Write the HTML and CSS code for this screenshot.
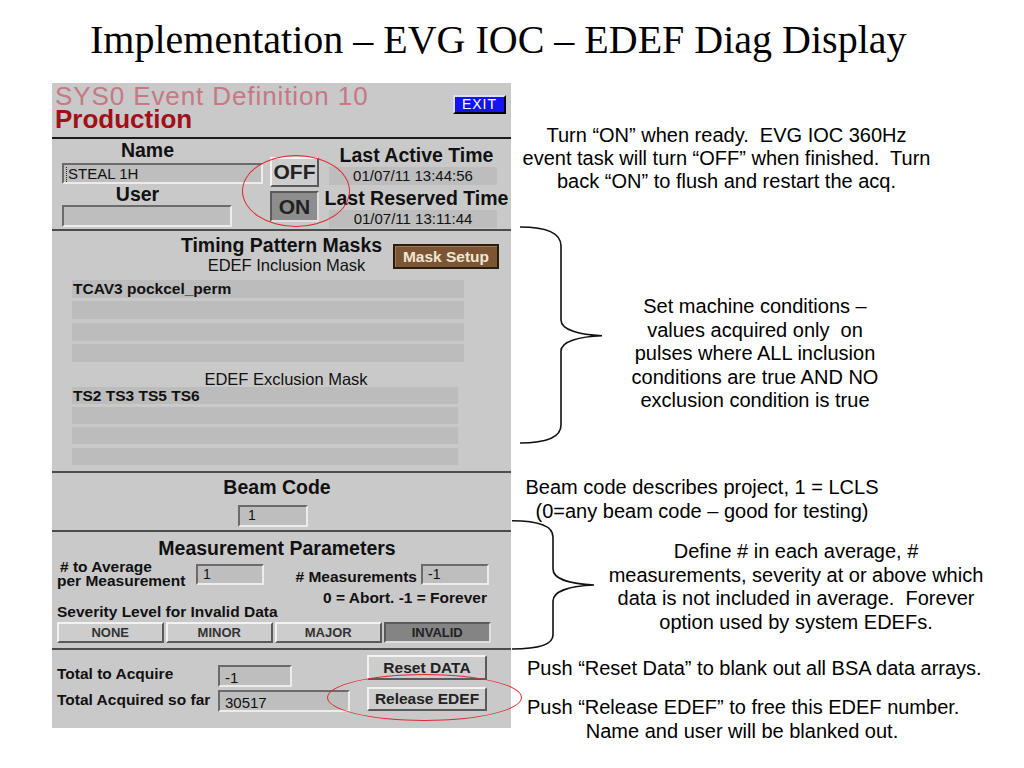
FILE: index.html
```html
<!DOCTYPE html>
<html lang="en">
<head>
    <meta charset="UTF-8">
    <title>Implementation – EVG IOC – EDEF Diag Display</title>
    <link rel="stylesheet" href="styles.css">
</head>
<body>
    <h1 class="slide-title">Implementation – EVG IOC – EDEF Diag Display</h1>
    <div class="slide">
        <div class="panel">
            <div class="sec head">
                <div class="head-title">
                    <div class="sys">SYS0 Event Definition 10</div>
                    <div class="prod">Production</div>
                </div>
                <div class="exit">EXIT</div>
            </div>

            <div class="sec ident">
                <div class="ident-left">
                    <div class="lbl lbl-name">Name</div>
                    <div class="field field-name"><span class="caret"></span>STEAL 1H</div>
                    <div class="lbl lbl-user">User</div>
                    <div class="field field-user"></div>
                </div>
                <div class="ident-mid">
                    <div class="btn btn-off">OFF</div>
                    <div class="btn btn-on">ON</div>
                </div>
                <div class="ident-right">
                    <div class="lbl">Last Active Time</div>
                    <div class="time">01/07/11 13:44:56</div>
                    <div class="lbl">Last Reserved Time</div>
                    <div class="time">01/07/11 13:11:44</div>
                </div>
                <div class="ring ring-onoff"></div>
            </div>

            <div class="sec masks">
                <div class="mask-head">
                    <div class="lbl mask-title">Timing Pattern Masks</div>
                    <div class="mask-sub">EDEF Inclusion Mask</div>
                    <div class="btn-setup">Mask Setup</div>
                </div>
                <div class="mask-rows incl">
                    <div class="mask-row">TCAV3 pockcel_perm</div>
                    <div class="mask-row"></div>
                    <div class="mask-row"></div>
                    <div class="mask-row"></div>
                </div>
                <div class="mask-sub excl-title">EDEF Exclusion Mask</div>
                <div class="mask-rows excl">
                    <div class="mask-row">TS2 TS3 TS5 TS6</div>
                    <div class="mask-row"></div>
                    <div class="mask-row"></div>
                    <div class="mask-row"></div>
                </div>
            </div>

            <div class="sec beam">
                <div class="lbl">Beam Code</div>
                <div class="field field-beam"><div class="val">1</div></div>
            </div>

            <div class="sec meas">
                <div class="lbl">Measurement Parameters</div>
                <div class="meas-row">
                    <div class="small avg-lbl"><span class="indent"># to Average</span><br>per Measurement</div>
                    <div class="field meas-field"><div class="val">1</div></div>
                    <div class="small count-lbl"># Measurements</div>
                    <div class="field meas-field"><div class="val">-1</div></div>
                </div>
                <div class="small meas-note">0 = Abort. -1 = Forever</div>
                <div class="small sev-lbl">Severity Level for Invalid Data</div>
                <div class="sev-row">
                    <div class="btn sev-btn">NONE</div>
                    <div class="btn sev-btn">MINOR</div>
                    <div class="btn sev-btn">MAJOR</div>
                    <div class="btn sev-btn sev-on">INVALID</div>
                </div>
            </div>

            <div class="sec acq">
                <div class="acq-labels">
                    <div class="small acq-l1">Total to Acquire</div>
                    <div class="small acq-l2">Total Acquired so far</div>
                </div>
                <div class="acq-fields">
                    <div class="field acq-f1"><div class="acq-val">-1</div></div>
                    <div class="field acq-f2"><div class="acq-val">30517</div></div>
                </div>
                <div class="acq-buttons">
                    <div class="btn acq-btn btn-reset">Reset DATA</div>
                    <div class="btn acq-btn btn-release">Release EDEF</div>
                </div>
                <div class="ring ring-release"></div>
            </div>
        </div>

        <div class="notes">
            <div class="note note-ready">Turn “ON” when ready.&nbsp; EVG IOC 360Hz<br>event task will turn “OFF” when finished.&nbsp; Turn<br>back “ON” to flush and restart the acq.</div>

            <div class="brace-row brace-masks">
                <svg class="brace" width="84" height="218" viewBox="0 0 84 218">
                    <path d="M0,1 C25,1 41,6 41,20 L41,94 C41,104 60,109 82,109.7 C60,110.5 41,115 41,125 L41,199 C41,212 25,217 0,217" />
                </svg>
                <div class="note">Set machine conditions –<br>values acquired only&nbsp; on<br>pulses where ALL inclusion<br>conditions are true AND NO<br>exclusion condition is true</div>
            </div>

            <div class="note note-beam">Beam code describes project, 1 = LCLS<br>(0=any beam code – good for testing)</div>

            <div class="brace-row brace-meas">
                <svg class="brace" width="84" height="132" viewBox="0 0 84 132">
                    <path d="M0,1.7 C25,1.7 41,6 41,18 L41,50 C41,60 58,65 82,66 C58,67 41,72 41,82 L41,116 C41,126 25,130 0,130" />
                </svg>
                <div class="note">Define # in each average, #<br>measurements, severity at or above which<br>data is not included in average.&nbsp; Forever<br>option used by system EDEFs.</div>
            </div>

            <div class="note note-reset">Push “Reset Data” to blank out all BSA data arrays.</div>
            <div class="note note-release">Push “Release EDEF” to free this EDEF number.<br>Name and user will be blanked out.</div>
        </div>
    </div>
</body>
</html>
```

FILE: styles.css
```css
body {
    margin: 0;
    background: #fff;
    font-family: "Liberation Sans", Arial, sans-serif;
    color: #000;
}
.slide-title {
    margin: 0;
    padding: 16px 0 0 90px;
    font-family: "Liberation Serif", "Times New Roman", serif;
    font-weight: normal;
    font-size: 40px;
    line-height: 48px;
}
.slide {
    display: flex;
    align-items: flex-start;
    margin-top: 19px;
}

/* the EDM panel */
.panel {
    margin-left: 52px;
    width: 459px;
    flex: none;
    background: #c9c9c9;
    color: #111;
}
.sec {
    position: relative;
    box-sizing: border-box;
    border-bottom: 2px solid #4c4c4c;
}
.lbl {
    font-weight: bold;
    font-size: 19.5px;
    line-height: 22px;
}
.small {
    font-weight: bold;
    font-size: 15.5px;
}
.field {
    box-sizing: border-box;
    background: #bebebe;
    border: 2px solid;
    border-color: #6b6b6b #ececec #ececec #6b6b6b;
    font-size: 15px;
}
.val {
    font-size: 14px;
    line-height: 14px;
    padding: 1px 0 0 5px;
}
.btn {
    box-sizing: border-box;
    background: #cdcdcd;
    border: 2px solid;
    border-color: #f2f2f2 #5a5a5a #5a5a5a #f2f2f2;
    text-align: center;
    font-weight: bold;
    color: #222;
}
.ring {
    position: absolute;
    border: 1.5px solid #e3262c;
    border-radius: 50%;
}

.head {
    height: 56px;
    display: flex;
    justify-content: space-between;
    align-items: flex-start;
    border-bottom-color: #1c1c1c;
}
.head-title {
    padding: 1.5px 0 0 3px;
    font-size: 26px;
    line-height: 23px;
}
.sys {
    color: #c67886;
    letter-spacing: 0.9px;
}
.prod {
    color: #a20f18;
    font-weight: bold;
}
.exit {
    margin: 12px 5px 0 0;
    width: 53px;
    height: 19px;
    box-sizing: border-box;
    background: #1414f0;
    color: #fff;
    border: 2px solid;
    border-color: #dcdcff #000 #000 #dcdcff;
    font-size: 14px;
    line-height: 15px;
    letter-spacing: 1px;
    text-align: center;
}

.ident {
    height: 92px;
    display: grid;
    grid-template-columns: 216px 54px 189px;
}
.ident-left {
    padding-left: 10px;
}
.lbl-name {
    width: 171px;
    text-align: center;
}
.field-name {
    margin-top: 2px;
    width: 201px;
    height: 21px;
    line-height: 17px;
    padding-left: 2px;
}
.caret {
    display: inline-block;
    height: 15px;
    border-left: 1px dotted #222;
    margin-right: 1px;
    vertical-align: -3px;
}
.lbl-user {
    width: 151px;
    text-align: center;
    line-height: 20px;
}
.field-user {
    margin-top: 1px;
    width: 170px;
    height: 22px;
}
.ident-mid {
    padding-left: 2px;
}
.btn-off,
.btn-on {
    width: 49px;
    font-size: 21px;
}
.btn-off {
    margin-top: 18px;
    height: 30px;
    line-height: 26px;
}
.btn-on {
    margin-top: 4px;
    height: 31px;
    line-height: 27px;
    background: #8d8d8d;
    border-color: #5a5a5a #dedede #dedede #5a5a5a;
}
.ident-right {
    padding-top: 5px;
    text-align: center;
}
.time {
    margin: 1px 0 2px 7px;
    width: 168px;
    height: 18px;
    background: #bdbdbd;
    font-size: 15px;
    line-height: 18px;
}
.ring-onoff {
    left: 190px;
    top: 16px;
    width: 106px;
    height: 70px;
}

.masks {
    height: 242px;
    padding-top: 3px;
}
.mask-head {
    display: grid;
    grid-template-columns: 1fr auto 1fr;
}
.mask-title {
    grid-column: 2;
    grid-row: 1;
}
.mask-sub {
    font-size: 16.5px;
    line-height: 18px;
    text-align: center;
}
.mask-head .mask-sub {
    grid-column: 2;
    grid-row: 2;
    padding-left: 10px;
}
.btn-setup {
    grid-column: 3;
    grid-row: 1 / span 2;
    justify-self: end;
    align-self: start;
    margin: 10px 12px 0 0;
    width: 106px;
    height: 25px;
    box-sizing: border-box;
    background: #7c5634;
    color: #efe6d6;
    border: 2px solid #2b1c0e;
    box-shadow: inset 1px 1px 0 #a27a52;
    font-weight: bold;
    font-size: 15.5px;
    line-height: 21px;
    text-align: center;
}
.mask-rows {
    display: flex;
    flex-direction: column;
    gap: 3.3px;
    padding-left: 20px;
}
.mask-row {
    background: #bcbcbc;
    font-weight: bold;
    font-size: 15.5px;
    padding-left: 1px;
    box-sizing: border-box;
}
.incl {
    margin-top: 6px;
}
.incl .mask-row {
    width: 392px;
    height: 18px;
    line-height: 18px;
}
.excl-title {
    margin-top: 9px;
    line-height: 16px;
    padding-left: 9px;
}
.excl .mask-row {
    width: 386px;
    height: 17px;
    line-height: 17px;
}

.beam {
    height: 59px;
    padding-top: 3px;
}
.beam .lbl {
    text-align: center;
    padding-right: 9px;
}
.field-beam {
    margin: 7px 0 0 186px;
    width: 70px;
    height: 22px;
}
.field-beam .val {
    padding-left: 8px;
}

.meas {
    height: 118px;
    padding-top: 5px;
}
.meas > .lbl {
    text-align: center;
    padding-right: 9px;
}
.meas-row {
    display: grid;
    grid-template-columns: 139px 68px 157px 68px;
    align-items: start;
    margin-top: 1px;
    padding-left: 5px;
}
.avg-lbl {
    line-height: 14px;
}
.indent {
    padding-left: 3px;
}
.meas-field {
    margin-top: 4px;
    height: 21px;
}
.count-lbl {
    margin-top: 7.6px;
    line-height: 18px;
    text-align: right;
    padding-right: 4px;
}
.meas-note {
    margin-top: 3px;
    line-height: 14px;
    text-align: right;
    padding-right: 24px;
}
.sev-lbl {
    margin-top: 0;
    line-height: 14px;
    padding-left: 5px;
}
.sev-row {
    display: grid;
    grid-template-columns: repeat(4, 106.5px);
    gap: 2.5px;
    margin-top: 2.7px;
    padding-left: 5px;
}
.sev-btn {
    height: 21.6px;
    font-size: 13px;
    line-height: 17.6px;
    color: #333;
}
.sev-on {
    background: #848484;
    color: #222;
    border-color: #5a5a5a #dedede #dedede #5a5a5a;
}

.acq {
    height: 78px;
    border-bottom: none;
    display: grid;
    grid-template-columns: 166px 149px 144px;
}
.acq-labels {
    padding-left: 5px;
}
.acq-labels .small {
    line-height: 18px;
}
.acq-l1 {
    margin-top: 15px;
}
.acq-l2 {
    margin-top: 8px;
}
.acq-f1 {
    margin-top: 15px;
    width: 74px;
    height: 22px;
}
.acq-f2 {
    margin-top: 3px;
    width: 132px;
    height: 22px;
}
.acq-val {
    font-size: 15px;
    line-height: 18px;
    padding: 2px 0 0 5px;
}
.acq-btn {
    width: 120px;
    font-weight: bold;
    font-size: 15.5px;
}
.btn-reset {
    margin-top: 5px;
    height: 25px;
    line-height: 21px;
}
.btn-release {
    margin-top: 7px;
    height: 24px;
    line-height: 20px;
}
.ring-release {
    left: 275px;
    top: 24px;
    width: 193px;
    height: 45px;
}

/* slide notes on the right */
.notes {
    display: flex;
    flex-direction: column;
    align-items: flex-start;
    font-size: 20px;
    line-height: 23.4px;
    white-space: nowrap;
}
.note {
    text-align: center;
}
.note-ready {
    margin-top: 41.4px;
    width: 431px;
    line-height: 22.6px;
}
.brace-row {
    display: flex;
    align-items: flex-start;
}
.brace {
    display: block;
    flex: none;
}
.brace path {
    fill: none;
    stroke: #111;
    stroke-width: 1.6;
}
.brace-masks {
    margin: 33.8px 0 0 9px;
}
.brace-masks .note {
    margin-top: 69.4px;
    width: 302px;
}
.note-beam {
    margin-top: 32.4px;
    width: 382px;
}
.brace-meas {
    margin: -4.2px 0 0 1px;
}
.brace-meas .note {
    margin-top: 21.4px;
    width: 400px;
}
.note-reset {
    margin: 6.4px 0 0 16px;
    text-align: left;
}
.note-release {
    margin: 15.6px 0 0 16px;
    width: 430px;
}
```
